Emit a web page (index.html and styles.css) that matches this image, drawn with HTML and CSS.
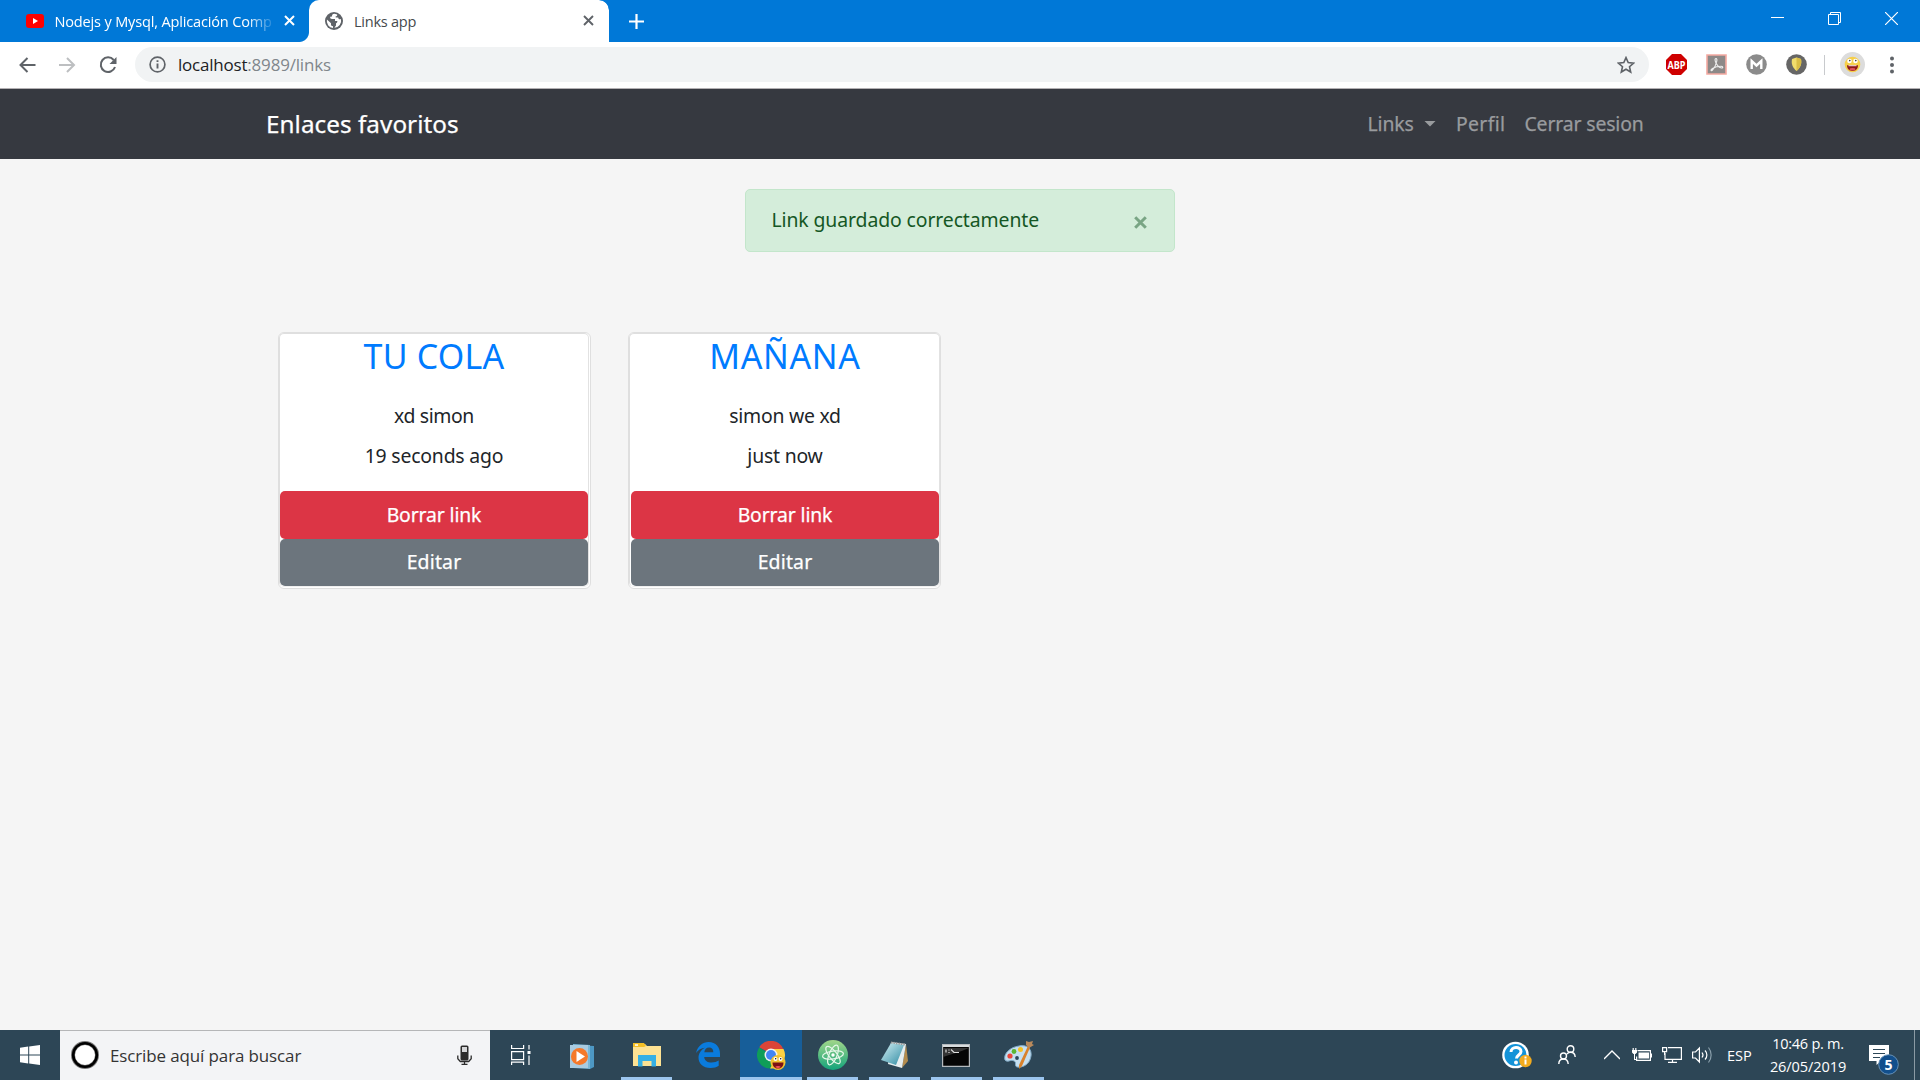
FILE: index.html
```html
<!DOCTYPE html>
<html lang="es">
<head>
<meta charset="utf-8">
<title>Links app</title>
<link rel="stylesheet" href="styles.css">
</head>
<body>
<div class="screen">
  <header class="tabs">
    <div class="tab">
      <svg class="yt" width="18" height="14" viewBox="0 0 18 14"><rect width="18" height="14" rx="3" fill="#f00"/><path d="M7 4v6l5-3z" fill="#fff"/></svg>
      <span class="tab-title fade">Nodejs y Mysql, Aplicación Comp</span>
      <svg width="11" height="11" viewBox="0 0 11 11"><path d="M1 1l9 9M10 1l-9 9" stroke="#fff" stroke-width="2"/></svg>
    </div>
    <div class="tab active">
      <svg width="18" height="18" viewBox="0 0 18 18"><circle cx="9" cy="9" r="9" fill="#5f6368"/><path d="M9.5 1.8c-2 .2-2.600 1.200-2.500 2.600l-1.800.3c-.3 1.600.5 2.200 1.800 2.300h3v2h2.300c.2 1.500-.5 2-1.300 2.200v2.300l-1.700 2.300A7.200 7.200 0 0 0 16 7c-1.500.8-2.800-.2-2.800-1.600h-2.500V4.200c1.300 0 1.600-.8 1.500-1.800z M1.900 7.600l4.100 3.700v1.500c0 1 1 1.300 2 1.400v1.900a7.200 7.200 0 0 1-6.100-8.500z" fill="#fff"/></svg>
      <span class="tab-title">Links app</span>
      <svg width="11" height="11" viewBox="0 0 11 11"><path d="M1 1l9 9M10 1l-9 9" stroke="#5f6368" stroke-width="1.900"/></svg>
    </div>
    <svg class="plus" width="15" height="15" viewBox="0 0 15 15"><path d="M7.500 0v15M0 7.500h15" stroke="#fff" stroke-width="2.200"/></svg>
    <div class="window-buttons">
      <svg width="13" height="13"><path d="M0 5.500h13" stroke="#fff"/></svg>
      <svg width="13" height="13" fill="none" stroke="#fff"><path d="M.5 2.500h10v10h-10z M2.500 2.500v-2h10v10h-2"/></svg>
      <svg width="13" height="13"><path d="M0 0l13 13M13 0L0 13" stroke="#fff" stroke-width="1.200"/></svg>
    </div>
  </header>

  <div class="toolbar">
    <svg width="17" height="16" viewBox="0 0 17 16" fill="none" stroke="#5f6368" stroke-width="2"><path d="M16.500 8H1.500M8.500 1L1.500 8l7 7"/></svg>
    <svg class="forward" width="17" height="16" viewBox="0 0 17 16" fill="none" stroke="#bdbfc1" stroke-width="2"><path d="M0 8h15M8 1l7 7-7 7"/></svg>
    <svg class="reload" width="18" height="18" viewBox="0 0 18 18"><path d="M14.700 4A7.300 7.300 0 1 0 16 11" fill="none" stroke="#5f6368" stroke-width="2"/><path d="M17.500 1v7h-7z" fill="#5f6368"/></svg>
    <div class="omnibox">
      <svg width="17" height="17" viewBox="0 0 17 17"><circle cx="8.500" cy="8.500" r="7.400" fill="none" stroke="#5f6368" stroke-width="1.700"/><path d="M8.500 7.400v5M8.500 4.300v1.800" stroke="#5f6368" stroke-width="1.900"/></svg>
      <span class="url">localhost<span class="path">:8989/links</span></span>
      <svg class="star" width="18" height="18" viewBox="0 0 18 18"><path d="M9 1.600l2.200 5 5.400.5-4.100 3.600 1.200 5.300L9 13.200 4.300 16l1.200-5.300-4.100-3.600 5.400-.5z" fill="none" stroke="#5f6368" stroke-width="1.600"/></svg>
    </div>
    <div class="extensions">
      <svg width="21" height="21" viewBox="0 0 21 21"><path d="M6 0h9l6 6v9l-6 6H6l-6-6V6z" fill="#cf0000"/><text x="10.500" y="14.700" text-anchor="middle" textLength="18" lengthAdjust="spacingAndGlyphs" class="abp">ABP</text></svg>
      <svg width="21" height="21" viewBox="0 0 21 21"><path d="M1 1h19v19H1z" fill="#8d8988" stroke="#f4a9a1" stroke-width="1.600"/><path d="M10 4.500c-1.500 0-1 2.500 0 4.500s3 4.500 5.500 5c2 .3 1.500-1.700-.5-1.700-3.500 0-6.500 1-8.500 2.200-2.500 1.500-1.500 3 0 1.500 1.800-1.800 3.500-5.500 4.200-8.500.4-1.700.2-3-.7-3z" fill="none" stroke="#eee" stroke-width="1.100"/></svg>
      <svg width="21" height="21" viewBox="0 0 21 21"><circle cx="10.500" cy="10.500" r="10.300" fill="#8b8b8b"/><path d="M5.700 15V7l4.800 4.500L15.300 7v8" fill="none" stroke="#fff" stroke-width="2.400"/></svg>
      <svg width="21" height="21" viewBox="0 0 21 21"><circle cx="10.500" cy="10.500" r="10.300" fill="#666"/><path d="M6 5l4.500-1.500L15 5c1 5-.5 8.500-4.500 12C6.500 13.500 5 10 6 5z" fill="#f0dc6c"/><path d="M10.500 3.500L15 5c1 5-.5 8.500-4.500 12z" fill="#d9bd45"/></svg>
    </div>
    <i class="divider"></i>
    <svg width="25" height="25" viewBox="0 0 25 25"><circle cx="12.500" cy="12.500" r="12.500" fill="#dcdcdc"/><circle cx="12.500" cy="12.500" r="7.800" fill="#f6cf4a"/><circle cx="9.500" cy="9" r="2.300" fill="#fff"/><circle cx="15.500" cy="9" r="2.300" fill="#fff"/><circle cx="9.800" cy="8.600" r=".8" fill="#333"/><circle cx="15.800" cy="8.600" r=".8" fill="#333"/><path d="M7 13.300h11c0 3.700-2.500 5.700-5.500 5.700s-5.500-2-5.500-5.700z" fill="#8d1717"/><path d="M8.500 13.300h8v.9h-8z" fill="#fff"/><ellipse cx="12.500" cy="17.200" rx="3" ry="1.300" fill="#e0505a"/></svg>
    <svg class="dots" width="4" height="18" viewBox="0 0 4 18" fill="#5f6368"><circle cx="2" cy="2.500" r="2"/><circle cx="2" cy="9" r="2"/><circle cx="2" cy="15.500" r="2"/></svg>
  </div>

  <nav class="navbar">
    <span class="brand">Enlaces favoritos</span>
    <span class="nav-link links">Links</span><i class="caret"></i>
    <span class="nav-link perfil">Perfil</span>
    <span class="nav-link cerrar">Cerrar sesion</span>
  </nav>

  <main class="page">
    <div class="alert">
      <span>Link guardado correctamente</span>
      <svg width="13" height="13" viewBox="0 0 13 13"><path d="M1.200 1.200l10.600 10.600M11.800 1.200L1.200 11.800" stroke="#79a584" stroke-width="3"/></svg>
    </div>
    <div class="cards">
      <article class="card">
        <div class="card-body">
          <h3 class="cola">TU COLA</h3>
          <p class="xd">xd simon</p>
          <p class="ago">19 seconds ago</p>
          <div class="btn danger">Borrar link</div>
          <div class="btn secondary">Editar</div>
        </div>
      </article>
      <article class="card inset">
        <div class="card-body">
          <h3 class="manana">MAÑANA</h3>
          <p class="we">simon we xd</p>
          <p class="now">just now</p>
          <div class="btn danger">Borrar link</div>
          <div class="btn secondary">Editar</div>
        </div>
      </article>
    </div>
  </main>

  <footer class="taskbar">
    <div class="start"><svg width="20" height="20" viewBox="0 0 20 20" fill="#fff"><path d="M0 2.800L8.200 1.600v7.900H0zM9.200 1.400L20 0v9.500H9.200zM0 10.500h8.200v7.900L0 17.200zM9.200 10.500H20V20L9.200 18.600z"/></svg></div>
    <div class="search">
      <svg width="28" height="28" viewBox="0 0 28 28"><circle cx="14" cy="14" r="12" fill="#fff" stroke="#777" stroke-width="4"/><circle cx="14" cy="14" r="11.800" fill="none" stroke="#000" stroke-width="2.600"/></svg>
      <span>Escribe aquí para buscar</span>
      <svg class="mic" width="15" height="20" viewBox="0 0 15 20"><rect x="3.500" y=".5" width="8" height="15" rx="1.500" fill="#2b2b2b"/><path d="M5 2h5v5H5z" fill="#d5d6d8"/><path d="M.8 10.500v3.300l2.500 2.700h8.400l2.500-2.700v-3.300M7.500 16.500v3M4.500 19.300h6" fill="none" stroke="#2b2b2b" stroke-width="1.300"/></svg>
    </div>
    <div class="app view"><svg width="20" height="20" viewBox="0 0 20 20" fill="none" stroke="#fff" stroke-width="1.200"><path d="M.6 0v3.500h12V0M.6 6.600h12v8H.6zM.6 20v-2.900h12V20M18 0v4.500M18 10.500V20"/><path d="M16.500 6h3v3h-3z" fill="#fff" stroke="none"/></svg></div>
    <div class="app wmp"><svg width="26" height="26" viewBox="0 0 26 26"><path d="M6 1l19 1v21l-4 2z" fill="#4d98c4"/><path d="M4 0l17 1v24L4 24z" fill="#79b7d8"/><path d="M1 1h18v23H1z" fill="#a9cbe0"/><circle cx="10.500" cy="12.500" r="8.500" fill="#f5792a"/><path d="M7.500 7v11l8.500-5.500z" fill="#fff"/></svg></div>
    <div class="app open"><svg width="28" height="24" viewBox="0 0 28 24"><path d="M0 1h12l2 2h14v20H0z" fill="#fde293"/><path d="M0 0h11l2 3-2 1H0z" fill="#f4bf26"/><path d="M2 1.300h3v1.500H2z" fill="#fff"/><path d="M5 12h18v11.500h-4.500V18h-9v5.500H5z" fill="#35b0e5"/></svg></div>
    <div class="app edge"><svg width="24" height="26" viewBox="0 0 24 26"><path d="M0 11C2 3.500 7 0 12.500 0 20 0 24 5.500 24 11.500V15H8.200c.4 4 3.600 5.600 7.300 5.600 3 0 5.200-.8 7.200-2v5.200C20.500 25.200 18 26 14.500 26 7 26 2.500 21.500 2.500 15.800c0-4.300 2.500-8 6.500-10C5.500 6 2 8 0 11zm8.300-.8h9c0-3-1.500-4.600-4.200-4.600S8.700 7.300 8.300 10.200z" fill="#0a7bdc"/></svg></div>
    <div class="app open current"><svg width="29" height="29" viewBox="0 0 29 29"><path d="M14 13L2.300 6.300A13.500 13.500 0 0 1 26 7.500L27 8z" fill="#db4437"/><path d="M14 14L2.300 6.500A13.500 13.500 0 0 0 13 27.500l6-10z" fill="#0f9d58"/><path d="M14 8h12.500A13.500 13.500 0 0 1 13 27.500l6-10z" fill="#fdd143"/><circle cx="14" cy="14" r="6.500" fill="#f1f1f1"/><circle cx="14" cy="14" r="5" fill="#4285f4"/><circle cx="21" cy="21.500" r="7.500" fill="#f3c231"/><circle cx="18.500" cy="18" r="2" fill="#fff"/><circle cx="23.500" cy="18" r="2" fill="#fff"/><circle cx="18.700" cy="17.800" r=".7"/><circle cx="23.700" cy="17.800" r=".7"/><path d="M15.500 21.500h11c0 4-2.500 6-5.500 6s-5.500-2-5.500-6z" fill="#7c1114"/><path d="M18 26c1-1.500 5-1.500 6 0-2 1.500-4 1.500-6 0z" fill="#ee4b55"/></svg></div>
    <div class="app open"><svg width="30" height="30" viewBox="0 0 30 30"><defs><linearGradient id="atom" x2="0" y2="1"><stop stop-color="#a1d68a"/><stop offset="1" stop-color="#13a37b"/></linearGradient></defs><circle cx="15" cy="15" r="15" fill="url(#atom)"/><g fill="none" stroke="#e6f7ea" stroke-width="1.200"><ellipse cx="15" cy="15" rx="10.500" ry="4" transform="rotate(-8 15 15)"/><ellipse cx="15" cy="15" rx="10.500" ry="4" transform="rotate(52 15 15)"/><ellipse cx="15" cy="15" rx="10.500" ry="4" transform="rotate(112 15 15)"/></g><circle cx="15" cy="15" r="1.700" fill="#fff"/></svg></div>
    <div class="app open"><svg width="28" height="28" viewBox="0 0 28 28"><defs><linearGradient id="note" x2="1" y2="1"><stop stop-color="#d5f1f5"/><stop offset="1" stop-color="#2d8aa2"/></linearGradient></defs><path d="M25 3l2 17-6 7z" fill="#b38c4e"/><path d="M10 1l15 2-4 24-14-4z" fill="#e6eef0"/><path d="M10 2l13 2-8 20L0 19z" fill="url(#note)"/><path d="M10 1.500l14 2" stroke="#9a9a9a" stroke-width="2" stroke-dasharray="1.500 1"/></svg></div>
    <div class="app open cmd"><svg width="28" height="23" viewBox="0 0 28 23"><path d="M.6.600h26.800v21.800H.6z" fill="#050505" stroke="#b4b9bd" stroke-width="1.200"/><path d="M1 1h26v2H1z" fill="#d8dcde"/><path d="M1 4h26c-9 4-18 6-26 9z" fill="#343434"/><path d="M4 5.500v3M7 5.500v1M7 8v1M9 5.500l3 3h5" fill="none" stroke="#ddd" stroke-width="1.200"/></svg></div>
    <div class="app open"><svg width="31" height="30" viewBox="0 0 31 30"><path d="M15 6c9-2 13 4 12 10-1 8-8 12-14 11-3-1 0-5-3-6-3-2-7 2-9-1C-1 14 6 7 15 6z" fill="#c5dff0" stroke="#7fa9c6"/><circle cx="6" cy="16" r="2.600" fill="#e9483c"/><circle cx="10" cy="11.500" r="2.400" fill="#5cb531"/><circle cx="16.500" cy="9.500" r="2.500" fill="#f7c223"/><circle cx="13" cy="18" r="1.900" fill="#2c4659"/><path d="M24 6l2 1.500L18 26l-3 3 0-4z" fill="#d9822c"/><path d="M22 1l3 1 4-1-1 3 2 1-5 3-3-3z" fill="#b98a5c"/></svg></div>
    <div class="tray">
      <svg width="30" height="29" viewBox="0 0 30 29"><circle cx="13.500" cy="14" r="13.300" fill="#fff"/><circle cx="13.500" cy="14" r="11" fill="#1493d8"/><path d="M9 11c0-6 10-6 10-.5 0 3.500-4.500 3.500-4.500 7" fill="none" stroke="#fff" stroke-width="3"/><circle cx="14" cy="21.500" r="2" fill="#fff"/><circle cx="23.500" cy="20" r="6.200" fill="#f3ab1e"/><path d="M23.500 18.500v5M23.500 15.500v2" stroke="#fff" stroke-width="2"/></svg>
      <svg class="people" width="18" height="20" viewBox="0 0 18 20" fill="none" stroke="#fff" stroke-width="1.400"><circle cx="12.500" cy="4" r="3.300"/><circle cx="5.500" cy="11" r="3"/><path d="M.8 19c0-3 2-5 4.700-5s4.500 2 4.700 5M9 9c1-1.200 2-1.700 3.500-1.700 3 0 4.500 2 4.700 4.700"/></svg>
      <svg class="chevron" width="16" height="10" viewBox="0 0 16 10"><path d="M0 9l8-8 8 8" fill="none" stroke="#fff" stroke-width="1.300"/></svg>
      <svg class="battery" width="20" height="14" viewBox="0 0 20 14"><path d="M5.500 2.600h12.900v9.800H4.600V8.500" fill="none" stroke="#fff" stroke-width="1.200"/><path d="M6.500 4.500h10.500v6H6.500zM18.500 5.500H20v4h-1.500zM0 2h5v2.500L3.500 6h-2L0 4.500zM.6 0h1.200v2H.6zM3.200 0h1.200v2H3.200zM2 6h1v5h2v1H2z" fill="#fff"/></svg>
      <svg class="net" width="20" height="16" viewBox="0 0 20 16" fill="none" stroke="#fff" stroke-width="1.200"><path d="M6 .6h13.400v11.800H3V6M10.500 12.500v3M6 15.400h9M.6.600h4v4h-4zM2.600 4.600V8"/></svg>
      <svg class="sound" width="20" height="18" viewBox="0 0 20 18" fill="none" stroke="#fff" stroke-width="1.200"><path d="M.6 6h2.900L7.400 2v14l-3.900-4H.6zM10 6.500c1.200 1.500 1.200 3.500 0 5M13 4.500c2.500 2.500 2.500 6.500 0 9"/><path d="M16.500 1.500c3.500 4.500 3.500 10.500 0 15" stroke="#8ba0ac"/></svg>
      <span class="lang">ESP</span>
      <div class="clock"><span class="time">10:46 p. m.</span><span class="date">26/05/2019</span></div>
      <svg class="action" width="30" height="30" viewBox="0 0 30 30"><path d="M0 0h20v16h-8l-4.500 4v-4H0z" fill="#fff"/><path d="M4 4.500h12M4 8.500h12M4 12.500h7" stroke="#2d4757" stroke-width="1.200"/><circle cx="19.500" cy="19.500" r="9.800" fill="#124f8c" stroke="#6f99bd" stroke-width=".9"/><text x="19.500" y="24.500" text-anchor="middle" class="badge">5</text></svg>
      <i class="desktop"></i>
    </div>
  </footer>
</div>
</body>
</html>
```
FILE: styles.css
```css
* { box-sizing: border-box; }
body { margin: 0; font-family: "Open Sans", sans-serif; }
svg { display: block; flex: none; }
span { white-space: nowrap; }
.screen { width: 1920px; height: 1080px; display: flex; flex-direction: column; overflow: hidden; background: #f5f5f5; }

.tabs { height: 42px; display: flex; align-items: center; background: linear-gradient(90deg, #0078d7 290px, #fff 290px, #fff 325px, #0078d7 325px); flex: none; }
.tab { width: 309px; height: 42px; display: flex; align-items: center; padding: 0 14px 1px 26px; background: #0078d7; border-bottom-right-radius: 10px; color: #fff; font-size: 14.550px; }
.tab-title { letter-spacing: -.25px; }
.fade { width: 219px; letter-spacing: -.17px; margin: 0 11px 0 10.500px; -webkit-mask-image: linear-gradient(90deg, #000 192px, transparent 221px); mask-image: linear-gradient(90deg, #000 192px, transparent 221px); }
.tab.active { width: 300px; background: linear-gradient(#0078d7, #0078d7) 0 0 / 0 0 no-repeat, #fff; color: #45494d; border-radius: 0 10px 0 0; padding: 0 15px 1px 16px; box-shadow: none; }
.active .tab-title { flex: 1; margin-left: 11px; }
.tab.active { clip-path: inset(0 round 10px 10px 0 0); }
.tabs { background: #0078d7; }
.tab:not(.active) { background: radial-gradient(circle at 0 0, #0078d7 9.500px, #fff 10.500px) 100% 100% / 10px 10px no-repeat, #0078d7; border-radius: 0; }
.plus { margin-left: 20px; }
.window-buttons { margin: 0 22px 5px auto; display: flex; gap: 44px; }

.toolbar { height: 47px; flex: none; display: flex; align-items: center; padding: 0 26px 1px 19px; background: #fff; border-bottom: 1px solid #b3b0b3; }
.forward { margin-left: 23px; }
.reload { margin: 0 18px 0 23px; }
.omnibox { width: 1514px; height: 35px; border-radius: 18px; background: #f1f3f4; display: flex; align-items: center; padding: 0 14px; }
.url { font-size: 16.970px; letter-spacing: -.19px; color: #202124; margin-left: 12px; }
.path { color: #80868b; letter-spacing: -.17px; }
.star { margin-left: auto; }
.extensions { display: flex; gap: 19px; margin-left: 17px; }
.abp { font: bold 11px "Open Sans", sans-serif; fill: #fff; }
.divider { width: 1px; height: 20px; background: #c8cacd; margin: 0 15px 0 17px; }
.dots { margin-left: auto; }

.navbar { height: 70px; flex: none; display: flex; align-items: center; padding: 0 0 1px 266px; background: #363940; font-family: "Noto Sans", sans-serif; -webkit-text-stroke: .25px; }
.brand { width: 1101.500px; font-size: 24.250px; letter-spacing: .05px; color: #fff; }
.nav-link { font-size: 19.400px; color: #999b9e; }
.links { width: 56.500px; letter-spacing: -.12px; }
.caret { width: 12px; height: 6px; background: #999b9e; clip-path: polygon(0 0, 100% 0, 50% 100%); }
.perfil { margin-left: 20px; width: 68.500px; letter-spacing: .35px; }
.cerrar { letter-spacing: -.14px; }

.page { height: 871px; flex: none; padding-top: 30px; font-family: "Noto Sans", sans-serif; font-size: 19.400px; }
.alert { width: 430px; height: 63px; margin: 0 auto; display: flex; align-items: center; justify-content: space-between; padding: 0 27px 2px 25.500px; background: #d4edda; border: 1px solid #c3e6cb; border-radius: 5px; color: #155724; letter-spacing: -.1px; }
.alert svg { margin-top: 5px; }
.cards { display: flex; gap: 37px; padding: 80px 0 0 278px; }
.card { width: 313px; height: 257px; padding: 0 1px 1px 0; border: 1px solid #dfdfdf; border-radius: 6px; background: #fff; }
.card-body { height: 254px; border: 1px solid #dfdfdf; border-right-color: #e2e2e2; border-bottom-color: #f0f0f0; border-radius: 5px; text-align: center; color: #212529; }
.inset { padding-right: 0; }
.inset .card-body { padding-left: 1px; }
h3 { margin: 0; padding-top: 1px; font-weight: 400; font-size: 33.950px; line-height: 42px; color: #007bff; }
p { margin: 0; line-height: 30px; }
.card p:nth-of-type(1) { margin-top: 24px; }
.card p:nth-of-type(2) { margin: 10px 0 20px; }
.cola { letter-spacing: .24px; }
.manana { letter-spacing: .65px; }
.xd { letter-spacing: -.38px; }
.ago { letter-spacing: -.19px; }
.we { letter-spacing: -.24px; }
.now { letter-spacing: -.2px; }
.btn { height: 47.500px; line-height: 47px; border-radius: 5px; color: #fff; -webkit-text-stroke: .25px; }
.danger { background: #dc3545; letter-spacing: -.14px; }
.secondary { background: #6c757d; line-height: 45px; letter-spacing: .18px; }

.taskbar { height: 50px; flex: none; display: flex; background: #2d4656; color: #fff; }
.start { width: 60px; display: flex; align-items: center; justify-content: center; }
.search { width: 430px; border-top: 1px solid #b5b6b8; background: #f3f4f6; display: flex; align-items: center; padding: 0 18px 1px 11px; font-size: 16.970px; letter-spacing: -.11px; color: #333; }
.search span { margin-left: 11px; }
.mic { margin-left: auto; }
.app { width: 62px; display: flex; align-items: center; justify-content: center; position: relative; }
.view { width: 64px; padding-right: 3px; }
.wmp { padding: 4px 6px 0 0; }
.edge, .cmd { padding-right: 2px; }
.open::after { content: ""; position: absolute; left: 5px; right: 6px; bottom: 0; height: 3px; background: #9bc5ee; }
.current { background: #175e99; }
.current::after { left: 0; right: 0; }
.tray { margin-left: auto; display: flex; align-items: center; }
.people { margin-left: 26px; }
.chevron { margin-left: 28px; }
.battery { margin-left: 12px; }
.net { margin-left: 10px; }
.sound { margin-left: 10px; }
.lang { font-size: 14.550px; margin-left: 15px; width: 25px; letter-spacing: 0; }
.clock { width: 78px; margin-left: 17px; display: flex; flex-direction: column; align-items: center; font-size: 14.550px; line-height: 23px; }
.time { letter-spacing: -.28px; }
.date { letter-spacing: -.1px; }
.action { margin: 10px 0 0 22px; }
.badge { font: bold 14px "Open Sans", sans-serif; fill: #fff; }
.desktop { width: 6px; height: 50px; margin-left: 15px; border-left: 1px solid #8b9aa4; }
```
